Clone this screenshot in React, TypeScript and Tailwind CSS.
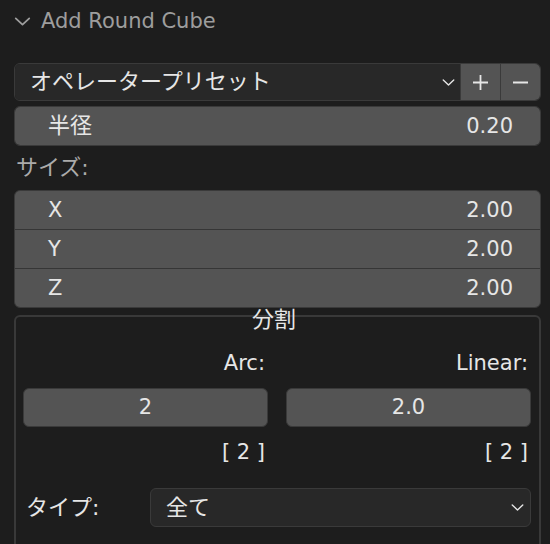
import React from "react";

const font = { fontFamily: '"DejaVu Sans", "Noto Sans CJK JP", sans-serif' };

function Chevron({ className }: { className?: string }) {
  return (
    <svg className={className} viewBox="0 0 14 8" fill="none" stroke="currentColor" strokeWidth="1.6" strokeLinecap="round" strokeLinejoin="round">
      <path d="M1 1.2l6 5.6 6-5.6" />
    </svg>
  );
}

function NumRow({ label, value }: { label: React.ReactNode; value: string }) {
  return (
    <div className="flex h-full items-center justify-between bg-[#545454] pl-[33px] pr-[27px] text-[#e6e6e6]">
      <span>{label}</span>
      <span>{value}</span>
    </div>
  );
}

export default function App() {
  return (
    <div className="h-[544px] w-[550px] overflow-hidden bg-[#1d1d1d] text-[21px] leading-none" style={font}>
      {/* header */}
      <div className="flex h-[42px] items-center gap-[10px] pl-[14px] text-[#9d9d9d]">
        <Chevron className="h-[9px] w-[17px]" />
        <span>Add Round Cube</span>
      </div>

      <div className="mt-[21px] pl-[14px] pr-[9px]">
        {/* preset */}
        <div className="flex h-[38px] overflow-hidden rounded-[6px] border border-[#3a3a3a]">
          <div className="flex flex-1 items-center justify-between bg-[#282828] pl-[15px] pr-[5px] text-[#e6e6e6]">
            <span className="text-[22px]">オペレータープリセット</span>
            <Chevron className="h-[7px] w-[13px]" />
          </div>
          <div className="flex w-[40px] items-center justify-center border-l border-[#3a3a3a] bg-[#545454] text-[#e6e6e6]">
            <svg className="h-[17px] w-[17px]" viewBox="0 0 17 17" stroke="currentColor" strokeWidth="1.8">
              <path d="M8.5 1v15M1 8.5h15" />
            </svg>
          </div>
          <div className="flex w-[40px] items-center justify-center border-l border-[#3a3a3a] bg-[#545454] text-[#e6e6e6]">
            <svg className="h-[17px] w-[17px]" viewBox="0 0 17 17" stroke="currentColor" strokeWidth="1.8">
              <path d="M1 8.5h15" />
            </svg>
          </div>
        </div>

        {/* radius */}
        <div className="mt-[5px] h-[40px] overflow-hidden rounded-[6px] border border-[#3a3a3a]">
          <NumRow label={<span className="text-[22px]">半径</span>} value="0.20" />
        </div>

        <div className="flex h-[44px] items-center pl-[2px] text-[22px] text-[#ababab]">サイズ:</div>

        {/* size */}
        <div className="grid h-[118px] grid-rows-3 gap-[1px] overflow-hidden rounded-[6px] border border-[#3a3a3a] bg-[#363636]">
          <NumRow label="X" value="2.00" />
          <NumRow label="Y" value="2.00" />
          <NumRow label="Z" value="2.00" />
        </div>

        {/* subdivision box */}
        <div className="mt-[7px] h-[240px] rounded-[6px] border-2 border-[#393939] pl-[7px] pr-[8px] text-[#e6e6e6]">
          <div className="-mt-[8px] flex h-[22px] items-center justify-center pr-[6px] text-[22px]">分割</div>

          <div className="mt-[20px] grid grid-cols-2 gap-x-[18px]">
            <div className="flex h-[24px] items-center justify-end pr-[3px]">Arc:</div>
            <div className="flex h-[24px] items-center justify-end pr-[3px]">Linear:</div>

            <div className="mt-[13px] flex h-[39px] items-center justify-center rounded-[6px] border border-[#3a3a3a] bg-[#545454]">2</div>
            <div className="mt-[13px] flex h-[39px] items-center justify-center rounded-[6px] border border-[#3a3a3a] bg-[#545454]">2.0</div>

            <div className="mt-[13px] flex h-[24px] items-center justify-end whitespace-pre pr-[3px]">[ 2 ]</div>
            <div className="mt-[13px] flex h-[24px] items-center justify-end whitespace-pre pr-[3px]">[ 2 ]</div>
          </div>

          <div className="mt-[24px] flex h-[39px] items-center">
            <span className="w-[127px] pl-[3px] text-[22px]">タイプ:</span>
            <div className="flex h-full flex-1 items-center justify-between rounded-[6px] border border-[#3a3a3a] bg-[#282828] pl-[15px] pr-[6px]">
              <span className="text-[22px]">全て</span>
              <Chevron className="h-[7px] w-[13px]" />
            </div>
          </div>
        </div>
      </div>
    </div>
  );
}
